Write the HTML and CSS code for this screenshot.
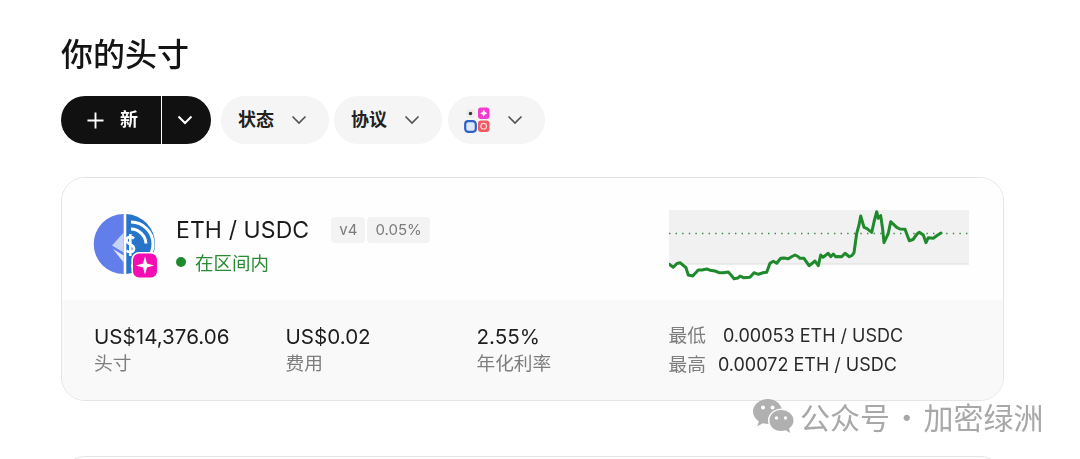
FILE: index.html
```html
<!DOCTYPE html>
<html lang="zh-CN">
<head>
<meta charset="utf-8">
<title>你的头寸</title>
<link rel="stylesheet" href="styles.css">
</head>
<body>
<main class="page">
  <h1 class="title">你的头寸</h1>
  <div class="toolbar">
    <div class="split">
      <button class="new-btn"><svg class="plus" viewBox="0 0 18 18"><path d="M9 0.5V17.5M0.5 9H17.5"/></svg><span class="btn-text">新</span></button>
      <button class="new-caret"><svg class="chev" viewBox="0 0 16 10"><path d="M1.5 1.5L8 8L14.5 1.5"/></svg></button>
    </div>
    <button class="pill"><span class="btn-text">状态</span><svg class="chev" viewBox="0 0 16 10"><path d="M1.5 1.5L8 8L14.5 1.5"/></svg></button>
    <button class="pill"><span class="btn-text">协议</span><svg class="chev" viewBox="0 0 16 10"><path d="M1.5 1.5L8 8L14.5 1.5"/></svg></button>
    <button class="pill pill-net">
      <svg class="nets" viewBox="0 0 26 26">
        <rect x="2" y="2" width="9" height="9" rx="3" fill="#ededed"/>
        <circle cx="6.5" cy="6.5" r="1.7" fill="#333"/>
        <rect x="14" y="0.5" width="11.5" height="11.5" rx="3" fill="#f23ccf"/>
        <path d="M19.7 2.6L21 5L23.4 6.2L21 7.4L19.7 9.8L18.5 7.4L16.1 6.2L18.5 5Z" fill="#fff"/>
        <rect x="1.2" y="14.2" width="10.6" height="10.6" rx="3" fill="#dfe8fb" stroke="#2f62c4" stroke-width="2.2"/>
        <rect x="14" y="13.5" width="11.5" height="11.5" rx="3" fill="#ee5a62"/>
        <circle cx="19.7" cy="19.2" r="2.8" fill="none" stroke="#fbd6d8" stroke-width="1.2"/>
      </svg>
      <svg class="chev" viewBox="0 0 16 10"><path d="M1.5 1.5L8 8L14.5 1.5"/></svg>
    </button>
  </div>

  <section class="card">
    <div class="card-top">
      <div class="pair">
        <svg class="pair-icon" viewBox="0 0 64 64">
          <path d="M29.7 0.5A30 30 0 0 0 29.7 60.5Z" fill="#627eea"/>
          <path d="M32.3 0.5A30 30 0 0 1 61 30.5A30 30 0 0 1 32.3 60.5Z" fill="#2775ca"/>
          <path d="M29.7 19L18 32L29.7 39Z" fill="#c9d3f7"/>
          <path d="M29.7 42L19 35.5L29.7 49Z" fill="#e3e8fb"/>
          <path d="M37 8.5A22 22 0 0 1 37 52.5M37 15.5A15.5 15.5 0 0 1 52 30" fill="none" stroke="#fff" stroke-width="3"/>
          <path d="M40 25C37 22 32.5 23.5 32.5 27C32.5 31 40 30.5 40 35C40 39 35 39.5 32.5 37M36.3 20.5V42.5" fill="none" stroke="#fff" stroke-width="2.6"/>
          <rect x="38.2" y="39.2" width="25.6" height="25.6" rx="7" fill="#f50db4" stroke="#fff" stroke-width="1.6"/>
          <path d="M51 43L53 50L60 52L53 54L51 61L49 54L42 52L49 50Z" fill="#fff"/>
        </svg>
        <div class="pair-text">
          <div class="pair-head">
            <span class="pair-name">ETH / USDC</span>
            <span class="tags"><span class="tag">v4</span><span class="tag">0.05%</span></span>
          </div>
          <div class="status"><i class="dot"></i>在区间内</div>
        </div>
      </div>
      <svg class="chart" viewBox="0 0 300 72">
        <rect x="0" y="0" width="300" height="54" fill="#f1f1f1"/>
        <path d="M0 54H300" stroke="#dcdcdc" stroke-width="1"/>
        <path d="M0 23.5H300" stroke="#3a8a45" stroke-width="1.4" stroke-dasharray="1.4 5.2" fill="none"/>
        <path transform="translate(-669 -210)" fill="none" stroke="#1f8a2c" stroke-width="3" stroke-linejoin="round" stroke-linecap="round" d="M669.3 264.3L673.3 267.3L677 263.5L680 262.7L684 266L686 267.7L688.3 275L692.7 276L698.3 270L702 270L706.7 269L710 270.2L715 271L719 272.7L723.3 272.7L728.3 272L731 275L734 278.7L738 278L740 276L743.3 277.7L747 277.5L750 277.3L754 272.7L758.3 274.3L763 272.8L766.7 272.3L770 263.3L773.3 261.3L776.7 263.3L780.7 258.3L784 258L788.3 258.7L792 256.5L795 255L798 256.5L800 258.3L804 258.3L809 265.7L812 263.5L815 261L818.3 265.7L820.7 255L823 257.3L826 255L828.3 253.3L830.7 256.7L833.3 254L835.7 256.7L838 256.5L841.7 256.7L845 253.3L849.3 256.7L852 255.5L854 252.7L856.7 233.3L859 225L860.7 216L864 227.3L866.7 228.3L871.7 232.3L874 222L876.7 211.7L878.3 218.3L880.7 215.7L882.5 228L884 242.7L888.3 233.3L890.7 221.7L896.7 227.3L900 229L905 229.3L909.3 240.7L913 239.5L917 234L919.3 232.3L923.3 235L926 242.7L928.3 237.7L933.3 238.3L937 235.5L941 233"/>
      </svg>
    </div>
    <div class="card-bottom">
      <div class="stat"><div class="stat-value">US$14,376.06</div><div class="stat-label">头寸</div></div>
      <div class="stat"><div class="stat-value">US$0.02</div><div class="stat-label">费用</div></div>
      <div class="stat"><div class="stat-value">2.55%</div><div class="stat-label">年化利率</div></div>
      <div class="range">
        <div class="range-row"><span class="stat-label">最低</span><span class="range-val range-low">0.00053 ETH / USDC</span></div>
        <div class="range-row"><span class="stat-label">最高</span><span class="range-val">0.00072 ETH / USDC</span></div>
      </div>
    </div>
  </section>
  <section class="card card-next"></section>
</main>
<div class="watermark">
  <svg class="wechat" viewBox="0 0 42 36">
    <path d="M16 1C7.7 1 1 6.6 1 13.6C1 17.6 3.3 21.1 6.8 23.4L5.2 28.3L11 25.3C12.8 25.8 14.7 26.1 16.7 26.1C16.3 24.9 16 23.7 16 22.4C16 15.9 22 10.7 29.7 10.6C27.9 5 22.5 1 16 1Z" fill="#b0b0b0"/>
    <path d="M41.5 22.5C41.5 16.6 35.7 12 29 12C22.3 12 17.5 16.6 17.5 22.5C17.5 28.4 22.3 33 29 33C30.6 33 32.2 32.7 33.6 32.3L38.2 35L37 30.6C39.8 28.5 41.5 25.7 41.5 22.5Z" fill="#b0b0b0"/>
    <circle cx="11" cy="9.5" r="2" fill="#fff"/><circle cx="20.5" cy="9.5" r="2" fill="#fff"/>
    <circle cx="24.5" cy="20" r="1.7" fill="#fff"/><circle cx="33.5" cy="20" r="1.7" fill="#fff"/>
  </svg>
  <span class="mark-text">公众号 · 加密绿洲</span>
</div>
</body>
</html>
```

FILE: styles.css
```css
* { box-sizing: border-box; }
html, body { margin: 0; height: 100%; overflow: hidden; background: #fff; }
body {
  font-family: Inter, "Noto Sans CJK SC", "Liberation Sans", sans-serif;
  color: #161616;
  position: relative;
}
.page { padding: 30px 76px 0 61px; filter: blur(0.4px); }
.title {
  margin: 0;
  height: 44px;
  font: 500 32px/44px "Noto Sans CJK SC", sans-serif;
  color: #141414;
}
.toolbar { display: flex; gap: 5px; margin-top: 22px; height: 48px; }
button {
  border: 0;
  margin: 0;
  padding: 0;
  font: 700 18px/24px "Noto Sans CJK SC", sans-serif;
  display: flex;
  align-items: center;
}
.btn-text { margin-bottom: 4px; }
.split { display: flex; gap: 1px; margin-right: 5px; }
.new-btn {
  width: 100px;
  height: 48px;
  background: #111;
  color: #fff;
  border-radius: 24px 0 0 24px;
  padding-left: 26px;
  gap: 16px;
}
.new-caret {
  width: 49px;
  height: 48px;
  background: #111;
  border-radius: 0 24px 24px 0;
  padding-left: 15px;
}
.new-caret .chev path { stroke: #fff; stroke-width: 2; }
.plus { width: 17px; height: 17px; }
.plus path { stroke: #fff; stroke-width: 2; fill: none; }
.chev { width: 16px; height: 10px; flex: none; }
.chev path { fill: none; stroke: #555; stroke-width: 1.7; }
.pill {
  height: 48px;
  width: 108px;
  background: #f5f5f5;
  color: #222;
  border-radius: 24px;
  padding-left: 17px;
  gap: 17px;
}
.pill .chev { margin-bottom: 1px; }
.pill-net { width: 97px; padding-left: 16px; gap: 17px; margin-left: 1px; }
.nets { width: 26px; height: 26px; flex: none; }
.card {
  margin-top: 33px;
  height: 224px;
  border: 1px solid #e4e4e4;
  border-radius: 24px;
  background: #fff;
  overflow: hidden;
}
.card-top {
  height: 122px;
  padding: 32px 34px 0 32px;
  display: flex;
  justify-content: space-between;
  align-items: flex-start;
  background: #fefefe;
}
.pair { display: flex; gap: 18px; }
.pair-icon { width: 64px; height: 65px; flex: none; margin-top: 3px; overflow: visible; }
.pair-text { padding-top: 3px; }
.pair-head { display: flex; align-items: center; gap: 22px; height: 34px; }
.pair-name { font-size: 23px; line-height: 34px; color: #1b1b1b; letter-spacing: 0.1px; }
.tags { display: flex; gap: 2px; }
.tag {
  height: 26px;
  padding: 0 8px;
  background: #f3f3f3;
  border-radius: 4px;
  font-size: 15px;
  line-height: 26px;
  color: #7b7b7b;
}
.status {
  display: flex;
  align-items: center;
  gap: 9px;
  height: 30px;
  font: 400 18.5px/30px "Noto Sans CJK SC", sans-serif;
  color: #2b8b35;
}
.dot { width: 10px; height: 10px; border-radius: 50%; background: #1f8a2c; }
.chart { width: 300px; height: 72px; flex: none; display: block; }
.card-bottom {
  height: 100px;
  background: #f9f9f9;
  padding: 24px 0 0 32px;
  display: grid;
  grid-template-columns: 191.5px 191px 192px 1fr;
}
.stat-value { font-size: 20.6px; line-height: 26px; color: #1e1e1e; }
.stat-label { font: 400 18.7px/24px "Noto Sans CJK SC", sans-serif; color: #7e7e7e; }
.range { margin-top: -3px; }
.range-row { display: flex; align-items: center; height: 29px; gap: 12px; }
.range-row .stat-label { margin-top: -4px; }
.range-val { font-size: 18px; line-height: 24px; color: #2a2a2a; }
.range-low { margin-left: 5px; }
.card-next { margin-top: 55px; height: 200px; }
.watermark {
  position: absolute;
  left: 752px;
  top: 396px;
  display: flex;
  align-items: center;
  gap: 6px;
  height: 40px;
  font: 400 30px/40px "Noto Sans CJK SC", sans-serif;
  color: #a8a8a8;
  white-space: nowrap;
  filter: blur(0.4px);
}
.mark-text { word-spacing: -5px; }
.wechat { width: 42px; height: 36px; flex: none; }
```
